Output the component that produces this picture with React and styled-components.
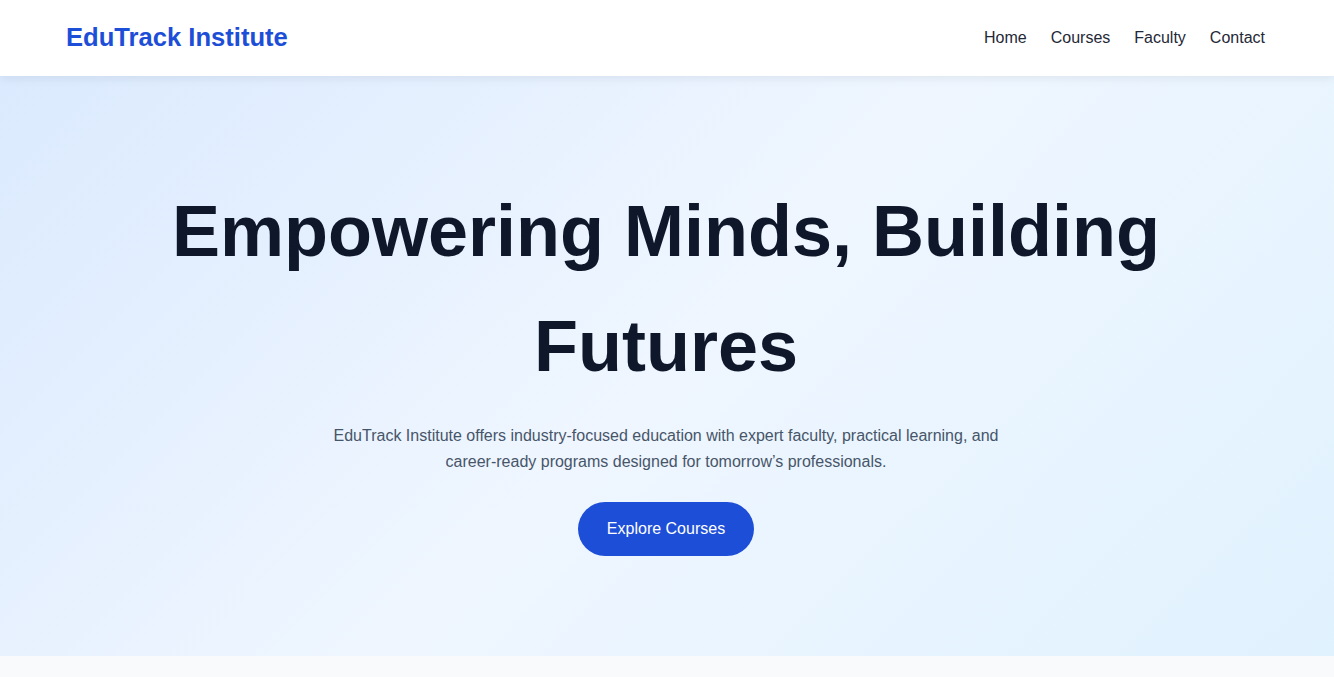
import React from 'react'
import styled, { createGlobalStyle } from 'styled-components'

const GlobalStyle = createGlobalStyle`
  * {
    box-sizing: border-box;
  }
  body {
    margin: 0;
    font-family: "Liberation Sans", Arial, sans-serif;
    line-height: 1.6;
    color: #1f2937;
    background: #f8fafc;
  }
`

const links = ['Home', 'Courses', 'Faculty', 'Contact']

function App() {
  return (
    <>
      <GlobalStyle />
      <Header>
        <Container>
          <Logo>EduTrack Institute</Logo>
          <Nav>
            {links.map((l) => (
              <NavLink key={l} href="#">{l}</NavLink>
            ))}
          </Nav>
        </Container>
      </Header>
      <Hero>
        <Title>Empowering Minds, Building Futures</Title>
        <Lead>
          EduTrack Institute offers industry-focused education with expert faculty, practical learning, and
          career-ready programs designed for tomorrow’s professionals.
        </Lead>
        <Button>Explore Courses</Button>
      </Hero>
      <Section />
    </>
  )
}

const Header = styled.header`
  position: relative;
  z-index: 2;
  height: 76px;
  background: #ffffff;
  box-shadow: 0 2px 10px rgba(15, 23, 42, 0.08);
  display: flex;
  align-items: center;
`

const Container = styled.div`
  width: 100%;
  max-width: 1200px;
  margin: 0 auto;
  padding: 0 2px 0 0;
  display: flex;
  align-items: center;
  justify-content: space-between;
`

const Logo = styled.div`
  margin: -2px 0 0 -1px;
  font-size: 25.6px;
  font-weight: 700;
  color: #1d4ed8;
`

const Nav = styled.nav`
  display: flex;
  gap: 24px;
`

const NavLink = styled.a`
  font-size: 16px;
  color: #1f2937;
  text-decoration: none;
`

const Hero = styled.section`
  height: 580px;
  padding: 98px 22px 100px 20px;
  background: linear-gradient(135deg, #dbeafe 0%, #eff6ff 50%, #e0f2fe 100%);
  display: flex;
  flex-direction: column;
  align-items: center;
  text-align: center;
`

const Title = styled.h1`
  margin: 0 0 19px;
  max-width: 1040px;
  font-size: 72px;
  font-weight: 700;
  line-height: 1.6;
  color: #0f172a;
`

const Lead = styled.p`
  margin: 0 0 27px;
  max-width: 700px;
  font-size: 16px;
  color: #475569;
`

const Button = styled.button`
  font-family: inherit;
  font-size: 16px;
  line-height: 1.6;
  padding: 14px 28.5px 14.5px;
  border: none;
  border-radius: 999px;
  background: #1d4ed8;
  color: #ffffff;
  cursor: pointer;
`

const Section = styled.section`
  height: 120px;
  background: #f8fafc;
`

export default App
